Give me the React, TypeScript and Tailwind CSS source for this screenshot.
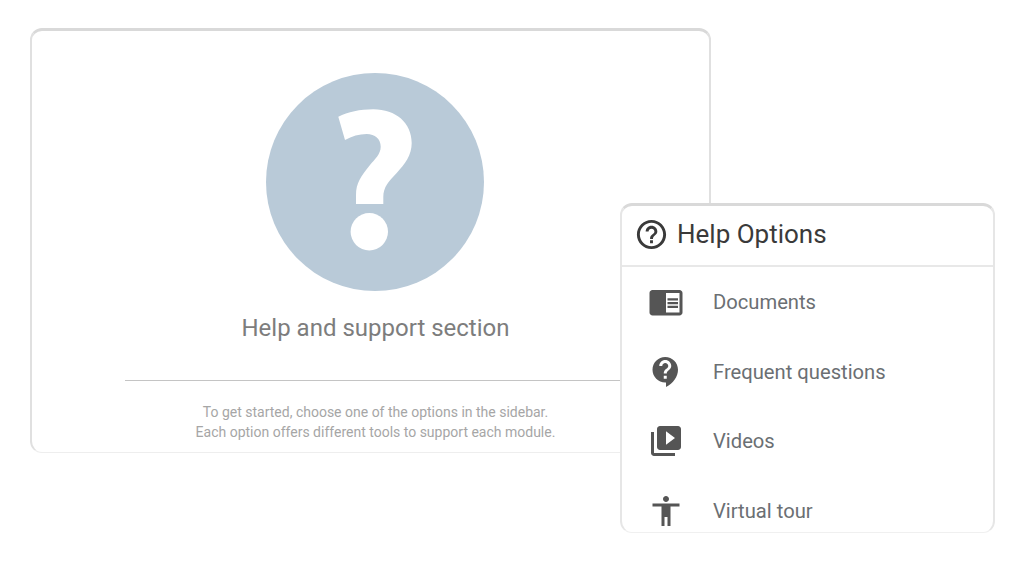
import React from 'react';
import { MdHelpOutline, MdChromeReaderMode, MdContactSupport, MdVideoLibrary, MdAccessibility } from 'react-icons/md';

const options = [
  { icon: <MdChromeReaderMode size={36} />, label: 'Documents' },
  { icon: <MdContactSupport size={36} />, label: 'Frequent questions' },
  { icon: <MdVideoLibrary size={36} />, label: 'Videos' },
  { icon: <MdAccessibility size={36} />, label: 'Virtual tour' },
];

const App = () => {
  return (
    <div className="relative w-[1024px] h-[576px] overflow-hidden bg-white pt-[28px] pl-[30px] font-['Roboto',sans-serif]">
      {/* Main card */}
      <div className="w-[681px] h-[425px] rounded-xl border-t-[3px] border-x-2 border-b border-t-[#d9d9d9] border-x-[#e0e0e0] border-b-[#eeeeee] flex flex-col items-center pt-[42px]">
        <div className="ml-[8px] w-[218px] h-[218px]">
          <svg viewBox="0 0 218 218" className="w-full h-full">
            <circle cx="109" cy="109" r="109" fill="#b9cad8" />
            <path
              d="M72.3 43.7 L79 67 C86 63 93 61 100.7 61 C109 61 114.7 66 114.7 73.7 C114.7 81 109 86 104 92 C95 103 90 110 90 122 L90 131 L117.3 131 L117.3 124 C117.3 114 123 108 130.7 100 C139 91 145.7 82 145.7 70 C145.7 50 130 36.3 107.3 36.3 C94 36.3 82 39 72.3 43.7 Z"
              fill="#ffffff"
            />
            <circle cx="103.3" cy="158.7" r="18.7" fill="#ffffff" />
          </svg>
        </div>
        <h2 className="ml-[10px] mt-[21px] text-[24px] leading-[32px] text-[#7d7d7d]">Help and support section</h2>
        <div className="self-start ml-[93px] mt-[36px] w-[560px] h-px bg-[#c4c4c4]"></div>
        <p className="ml-[10px] mt-[21px] text-[14px] leading-[20px] text-[#a6a6a6] text-center">
          To get started, choose one of the options in the sidebar.
          <br />
          Each option offers different tools to support each module.
        </p>
      </div>

      {/* Help options panel */}
      <div className="absolute left-[620px] top-[203px] w-[375px] h-[330px] bg-white rounded-xl border-t-[3px] border-x-2 border-b border-t-[#d9d9d9] border-x-[#e6e6e6] border-b-[#f0f0f0] overflow-hidden">
        <div className="h-[61px] flex items-center gap-[8px] pl-[12px] pb-[3px] border-b-2 border-[#e8e8e8] text-[#3a3a3a]">
          <MdHelpOutline size={35} />
          <span className="text-[26px] leading-[32px] mb-px">Help Options</span>
        </div>
        <div className="pt-[0.5px]">
          {options.map((option) => (
            <div key={option.label} className="h-[69.5px] flex items-center pl-[26px] gap-[29px]">
              <span className="text-[#555555]">{option.icon}</span>
              <span className="text-[20.2px] text-[#6b6f73]">{option.label}</span>
            </div>
          ))}
        </div>
      </div>
    </div>
  );
};

export default App;
